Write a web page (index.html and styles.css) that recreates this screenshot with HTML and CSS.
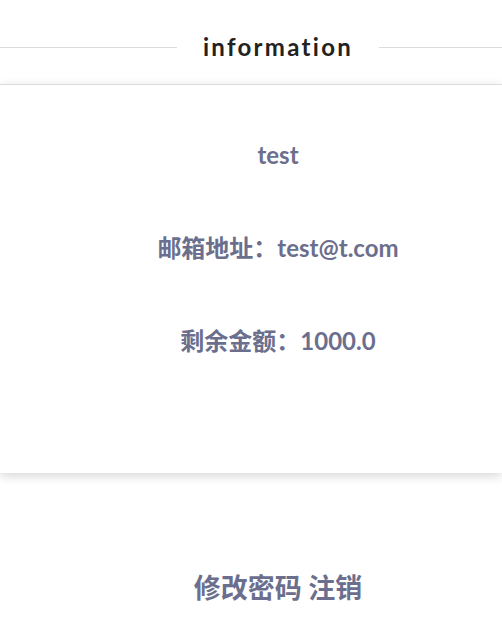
FILE: index.html
```html
<!DOCTYPE html>
<html lang="zh">
<head>
<meta charset="utf-8">
<title>information</title>
<link rel="stylesheet" href="styles.css">
</head>
<body>
<div class="page">
  <header class="head">
    <span class="head-line head-line-left"></span>
    <h1 class="head-title">information</h1>
    <span class="head-line"></span>
  </header>
  <section class="card">
    <p class="row">test</p>
    <p class="row">邮箱地址：test@t.com</p>
    <p class="row">剩余金额：1000.0</p>
  </section>
  <div class="actions">
    <span class="action">修改密码</span> <span class="action">注销</span>
  </div>
</div>
</body>
</html>
```
FILE: styles.css
```css
html, body {
  margin: 0;
  padding: 0;
  background: #fff;
}
body {
  font-family: Lato, "Noto Sans CJK SC", sans-serif;
  overflow: hidden;
}
.page {
  width: 100%;
}
.head {
  display: flex;
  align-items: center;
  gap: 26px;
  padding: 29px 0 19px;
}
.head-line {
  flex: 1 1 0;
  height: 1px;
  background: #dcdcdc;
}
.head-line-left {
  flex-basis: 54px;
}
.head-title {
  margin: 0;
  font-size: 24px;
  line-height: 36px;
  font-weight: 700;
  letter-spacing: 2.3px;
  color: #222;
}
.card {
  border-top: 1px solid #ddd;
  box-shadow: 0 3px 10px rgba(0,0,0,0.16);
  padding: 55px 0 117px 54px;
  display: flex;
  flex-direction: column;
  gap: 63px;
  text-align: center;
}
.row {
  margin: 0;
  font-size: 24px;
  line-height: 30px;
  font-weight: 700;
  color: #6b6f8d;
}
.actions {
  margin-top: 97px;
  padding-left: 54px;
  text-align: center;
  font-size: 27px;
  line-height: 36px;
  font-weight: 700;
  color: #6b6f8d;
}
```
